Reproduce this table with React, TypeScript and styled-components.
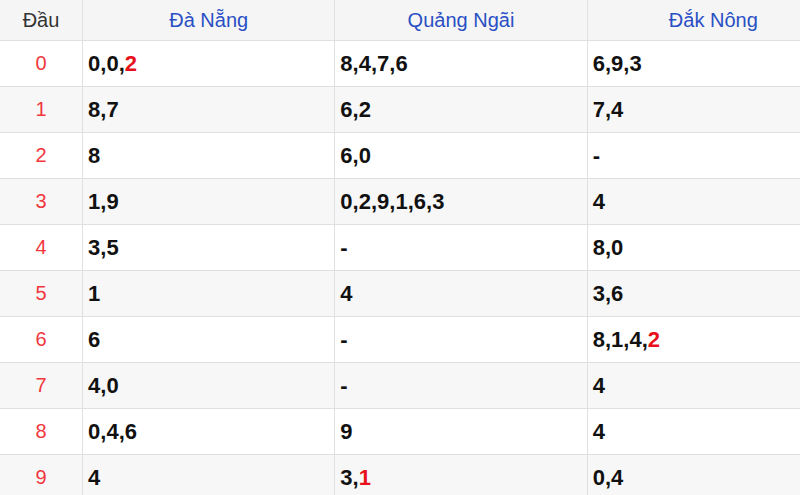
import React from 'react';
import styled, { createGlobalStyle } from 'styled-components';

const GlobalStyle = createGlobalStyle`
  html, body {
    margin: 0;
    padding: 0;
    background: #fff;
    overflow: hidden;
  }
  body {
    font-family: "Liberation Sans", Arial, sans-serif;
  }
`;

type Cell = { nums: string[]; hot?: number[] };

interface Row {
  head: number;
  cells: Cell[];
}

const stations = ['Đà Nẵng', 'Quảng Ngãi', 'Đắk Nông'];

// hot = indexes of numbers shown in red
const rows: Row[] = [
  { head: 0, cells: [{ nums: ['0', '0', '2'], hot: [2] }, { nums: ['8', '4', '7', '6'] }, { nums: ['6', '9', '3'] }] },
  { head: 1, cells: [{ nums: ['8', '7'] }, { nums: ['6', '2'] }, { nums: ['7', '4'] }] },
  { head: 2, cells: [{ nums: ['8'] }, { nums: ['6', '0'] }, { nums: [] }] },
  { head: 3, cells: [{ nums: ['1', '9'] }, { nums: ['0', '2', '9', '1', '6', '3'] }, { nums: ['4'] }] },
  { head: 4, cells: [{ nums: ['3', '5'] }, { nums: [] }, { nums: ['8', '0'] }] },
  { head: 5, cells: [{ nums: ['1'] }, { nums: ['4'] }, { nums: ['3', '6'] }] },
  { head: 6, cells: [{ nums: ['6'] }, { nums: [] }, { nums: ['8', '1', '4', '2'], hot: [3] }] },
  { head: 7, cells: [{ nums: ['4', '0'] }, { nums: [] }, { nums: ['4'] }] },
  { head: 8, cells: [{ nums: ['0', '4', '6'] }, { nums: ['9'] }, { nums: ['4'] }] },
  { head: 9, cells: [{ nums: ['4'] }, { nums: ['3', '1'], hot: [1] }, { nums: ['0', '4'] }] },
];

const App: React.FC = () => {
  return (
    <>
      <GlobalStyle />
      <Table>
        <thead>
          <tr>
            <HeadCell>Đầu</HeadCell>
            {stations.map((s) => (
              <StationCell key={s}>{s}</StationCell>
            ))}
          </tr>
        </thead>
        <tbody>
          {rows.map((r) => (
            <BodyRow key={r.head} $odd={r.head % 2 === 1}>
              <IndexCell>{r.head}</IndexCell>
              {r.cells.map((c, i) => (
                <NumCell key={i}>
                  {c.nums.length === 0
                    ? '-'
                    : c.nums.map((n, j) => (
                        <React.Fragment key={j}>
                          {j > 0 && ','}
                          {c.hot?.includes(j) ? <Hot>{n}</Hot> : n}
                        </React.Fragment>
                      ))}
                </NumCell>
              ))}
            </BodyRow>
          ))}
        </tbody>
      </Table>
    </>
  );
};

const Table = styled.table`
  width: 840px;
  border-collapse: collapse;
  table-layout: fixed;
  font-size: 20px;

  td, th {
    border: 1px solid #e0e0e0;
    padding: 0 5px;
  }

  tr > :first-child {
    width: 72px;
    border-left: none;
  }

  thead th {
    border-top: none;
  }
`;

const HeadCell = styled.th`
  height: 40px;
  background: #f5f5f5;
  color: #333;
  font-weight: 400;
  text-align: center;
`;

const StationCell = styled(HeadCell)`
  color: #2a4fc4;
`;

const BodyRow = styled.tr<{ $odd: boolean }>`
  height: 46px;
  background: ${(p) => (p.$odd ? '#f7f7f7' : '#fff')};
`;

const IndexCell = styled.td`
  color: #f0373d;
  text-align: center;
`;

const NumCell = styled.td`
  color: #111;
  font-size: 22px;
  font-weight: 700;
  text-align: left;
`;

const Hot = styled.span`
  color: #e8101a;
`;

export default App;
